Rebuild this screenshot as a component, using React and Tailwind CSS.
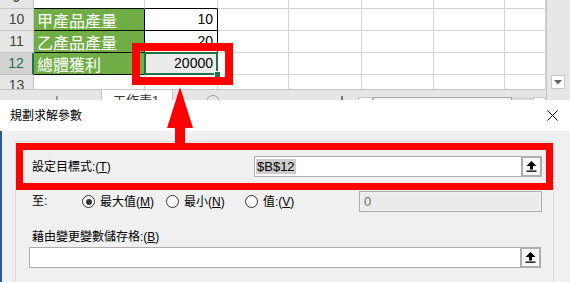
import React from "react";

const rows = [
  { n: 9, a: "", b: "" },
  { n: 10, a: "甲產品產量", b: "10" },
  { n: 11, a: "乙產品產量", b: "20" },
  { n: 12, a: "總體獲利", b: "20000", selected: true },
  { n: 13, a: "", b: "" },
];

const restCols = ["w-[71px]", "w-[73px]", "w-[72px]", "w-[71px]", "w-[41px]"];

function UpButton() {
  return (
    <div className="w-[21px] h-full shrink-0 border-2 border-[#adadad] bg-[#f7f7f7] flex items-center justify-center">
      <svg width="11" height="11" viewBox="0 0 11 11">
        <polygon points="5.5,0 0.5,5 10.5,5" fill="#000" />
        <rect x="4" y="4.5" width="3" height="4" fill="#000" />
        <rect x="0.5" y="9.5" width="10" height="1.3" fill="#000" />
      </svg>
    </div>
  );
}

function Radio({ checked }) {
  return (
    <span className="w-[13px] h-[13px] rounded-full border border-[#333] bg-white flex items-center justify-center shrink-0">
      {checked && <span className="w-[6px] h-[6px] rounded-full bg-[#333]" />}
    </span>
  );
}

function SheetRow({ r }) {
  const boxed = r.n >= 9 && r.n <= 12;
  const inTable = r.n >= 10 && r.n <= 12;
  return (
    <div className="flex h-[22px]">
      <div
        className={
          r.selected
            ? "w-[34px] shrink-0 bg-[#d2d2d2] border-b border-[#bdbdbd] border-r-2 border-r-[#217346] text-[#217346] flex items-center justify-center text-[14px]"
            : "w-[34px] shrink-0 bg-[#e6e6e6] border-b border-r border-[#c8c8c8] text-[#444] flex items-center justify-center text-[14px]"
        }
      >
        {r.n}
      </div>
      <div
        className={
          inTable
            ? "w-[111px] shrink-0 bg-[#70ad47] border-b border-r border-black text-white text-[16px] pl-[3px] flex items-center font-['Noto_Sans_CJK_TC',sans-serif]"
            : boxed
            ? "w-[111px] shrink-0 border-b border-b-black border-r border-r-[#d4d4d4]"
            : "w-[111px] shrink-0 border-b border-r border-[#d4d4d4]"
        }
      >
        {r.a}
      </div>
      <div
        className={
          r.selected
            ? "relative w-[73px] shrink-0 bg-[#ebebeb] border-b border-r border-black text-[14px] text-black pr-[4px] flex items-center justify-end"
            : inTable
            ? "w-[73px] shrink-0 bg-white border-b border-r border-black text-[14px] text-black pr-[4px] flex items-center justify-end"
            : boxed
            ? "w-[73px] shrink-0 border-b border-b-black border-r border-r-[#d4d4d4]"
            : "w-[73px] shrink-0 border-b border-r border-[#d4d4d4]"
        }
      >
        {r.b}
        {r.selected && (
          <>
            <div className="absolute -left-px -top-px -right-px -bottom-px border-2 border-[#217346]" />
            <div className="absolute -right-[4px] -bottom-[4px] w-[7px] h-[7px] bg-[#217346] border border-white" />
          </>
        )}
      </div>
      {restCols.map((w, i) => (
        <div key={i} className={`${w} shrink-0 border-b border-r border-[#d4d4d4]`} />
      ))}
    </div>
  );
}

export default function App() {
  return (
    <div className="relative w-[570px] h-[282px] overflow-hidden bg-white font-['Liberation_Sans','Noto_Sans_CJK_TC',sans-serif] text-black">
      {/* spreadsheet */}
      <div className="flex h-[100px]">
        <div className="w-[546px] flex flex-col">
          <div className="h-[89px] overflow-hidden">
            <div className="-mt-[13px]">
              {rows.map((r) => (
                <SheetRow key={r.n} r={r} />
              ))}
            </div>
          </div>
          <div className="h-[11px] flex bg-[#e6e6e6] border-t border-[#c6c6c6] overflow-hidden">
            <div className="w-[101px] shrink-0 pl-[56px] pt-[6px]">
              <div className="w-[2px] h-[4px] bg-[#9a9a9a]" />
            </div>
            <div className="w-[72px] shrink-0 bg-white border-x border-[#c6c6c6] pl-[11px] pt-[4px] text-[13px] leading-[13px] text-[#333]">
              工作表1
            </div>
            <div className="w-[185px] shrink-0 flex pt-[5px]">
              <div className="ml-[33px] w-[14px] h-[14px] rounded-full border border-[#9a9a9a]" />
              <div className="ml-[121px] mt-[1px] w-[2px] h-[5px] bg-[#777]" />
            </div>
            <div className="w-[188px] shrink-0 flex pt-[7px]">
              <div className="w-[15px] h-[10px] bg-white border border-[#c6c6c6]" />
              <div className="w-[139px] h-[10px] bg-[#f3f3f3] border border-[#a6a6a6]" />
              <div className="w-[21px] h-[10px] bg-[#d9d9d9]" />
              <div className="w-[13px] h-[10px] bg-white border border-[#c6c6c6]" />
            </div>
          </div>
        </div>
        <div className="w-[24px] h-[100px] bg-[#e6e6e6] border-l border-[#c6c6c6] pl-[4px] pt-[75px]">
          <div className="w-[14px] h-[14px] bg-white border border-[#c6c6c6] flex items-center justify-center">
            <svg width="8" height="5" viewBox="0 0 8 5">
              <polygon points="0,0 8,0 4,4.5" fill="#666" />
            </svg>
          </div>
        </div>
      </div>

      {/* dialog */}
      <div className="h-[31px] bg-white flex items-center justify-between pl-[10px] pr-[12px]">
        <span className="text-[12px] leading-[16px]">規劃求解參數</span>
        <svg width="11" height="11" viewBox="0 0 11 11">
          <path d="M0.5 0.5 L10.5 10.5 M10.5 0.5 L0.5 10.5" stroke="#000" strokeWidth="1" />
        </svg>
      </div>
      <div className="h-[151px] bg-[#f0f0f0] border-l-2 border-[#2b5a8a] pt-[10px]">
        <div className="ml-[13px] w-[539px] h-[141px] border-l border-t border-r border-[#dcdcdc] text-[12px] leading-[16px]">
          <div className="mt-[14px] h-[21px] flex items-center pl-[16px] pr-[11px]">
            <span className="flex-1">
              設定目標式:(<span className="underline">T</span>)
            </span>
            <div className="w-[288px] h-full flex">
              <div className="flex-1 border border-r-0 border-[#adadad] bg-white flex items-center pl-[1px]">
                <span className="bg-[#cccccc] text-[13px] leading-[15px] px-[1px]">$B$12</span>
              </div>
              <UpButton />
            </div>
          </div>

          <div className="mt-[14px] h-[21px] flex items-center pl-[16px] pr-[11px]">
            <span className="w-[50px] shrink-0 -mt-[2px]">至:</span>
            <div className="w-[84px] shrink-0 flex items-center gap-[5px]">
              <Radio checked />
              <span>
                最大值(<span className="underline">M</span>)
              </span>
            </div>
            <div className="w-[79px] shrink-0 flex items-center gap-[5px]">
              <Radio />
              <span>
                最小(<span className="underline">N</span>)
              </span>
            </div>
            <div className="flex items-center gap-[5px]">
              <Radio />
              <span>
                值:(<span className="underline">V</span>)
              </span>
            </div>
            <div className="ml-auto w-[183px] h-full border border-[#adadad] bg-[#f0f0f0] p-[2px]">
              <div className="h-full bg-[#ebebeb] text-[#6d6d6d] text-[13px] leading-[15px] pl-[2px]">0</div>
            </div>
          </div>

          <div className="mt-[17px] pl-[16px]">
            藉由變更變數儲存格:(<span className="underline">B</span>)
          </div>

          <div className="mt-[2px] ml-[13px] w-[512px] h-[21px] flex">
            <div className="flex-1 border border-r-0 border-[#adadad] bg-white" />
            <UpButton />
          </div>
        </div>
      </div>

      {/* annotations */}
      <div className="absolute left-[132px] top-[43px] w-[101px] h-[42px] border-[8px] border-[#ff0000]" />
      <div className="absolute left-[16px] top-[143px] w-[537px] h-[47px] border-[7px] border-[#ff0000]" />
      <svg className="absolute left-[166px] top-[86px]" width="28" height="58" viewBox="0 0 28 58">
        <polygon points="14,1 1,42 27,42" fill="#ff0000" />
        <rect x="9" y="41" width="10" height="17" fill="#ff0000" />
      </svg>
    </div>
  );
}
